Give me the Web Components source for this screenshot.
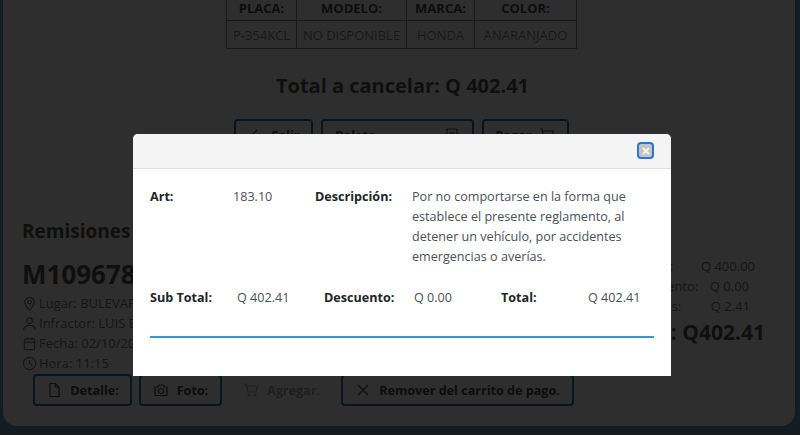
<!DOCTYPE html>
<html lang="es">
<head>
<meta charset="utf-8">
<title>Carrito de pago</title>
<style>
  html, body { margin: 0; height: 435px; overflow: hidden; background: #7097b8; }
  body { font-family: "Open Sans", "Noto Sans", sans-serif; }
</style>
</head>
<body>
<pay-page>
  <vehicle-table></vehicle-table>
  <h2 class="total" slot="total">Total a cancelar: Q 402.41</h2>
  <top-actions slot="actions"></top-actions>
  <remision-card slot="remision"></remision-card>
</pay-page>
<detail-modal></detail-modal>

<script>
const ICONS = {
  back: '<path d="M9 3 4 8l5 5M4 8h10"/>',
  print: '<rect x="3" y="2" width="10" height="12" rx="1"/><path d="M5 6h6M5 9h6"/>',
  cart: '<path d="M1 2h2l2 8h8l1.500-6H4"/><circle cx="6" cy="13" r="1"/><circle cx="12" cy="13" r="1"/>',
  file: '<path d="M4 1.500h5.500L13 5v9.500H4zM9.500 1.500V5H13"/>',
  camera: '<path d="M2 5h3l1-2h4l1 2h3v8.500H2z"/><circle cx="8" cy="9" r="2.500"/>',
  close: '<path d="M3 3l10 10M13 3 3 13"/>',
  pin: '<path d="M8 15S3 10 3 6.500a5 5 0 0 1 10 0C13 10 8 15 8 15z"/><circle cx="8" cy="6.500" r="2"/>',
  user: '<circle cx="8" cy="5" r="3"/><path d="M1.500 14.500c1-3.500 3.500-4.500 6.500-4.500s5.500 1 6.500 4.500"/>',
  date: '<rect x="2.500" y="3" width="11" height="11.500" rx="1.500"/><path d="M2.500 6.500h11M5.500 1.500V4M10.500 1.500V4"/>',
  clock: '<circle cx="8" cy="8" r="6.500"/><path d="M8 4v4l3 2"/>'
};
function icon(name, size) {
  return `<svg width="${size}" height="${size}" viewBox="0 0 16 16" fill="none" stroke="currentColor" stroke-width="1.200">${ICONS[name]}</svg>`;
}

class PayPage extends HTMLElement {
  constructor() {
    super();
    this.attachShadow({ mode: "open" });
    this.shadowRoot.innerHTML = `
    <style>
      :host {
        display: block;
        box-sizing: border-box;
        height: 428px;
        margin: 0 0 0 1px;
        width: 796px;
        overflow: hidden;
        background: #fff;
        color: #777;
        border: 2px solid #5f9ccc;
        border-top: 0;
        border-radius: 0 0 16px 16px;
      }
      .top { display: flex; flex-direction: column; align-items: center; }
      ::slotted(h2.total) {
        margin: 22px 0 18px 7px;
        font-size: 20px;
        line-height: 30px;
        font-weight: 700;
        color: #555;
      }
    </style>
    <div class="top">
      <slot></slot>
      <slot name="total"></slot>
      <slot name="actions"></slot>
    </div>
    <slot name="remision"></slot>`;
  }
}

class VehicleTable extends HTMLElement {
  constructor() {
    super();
    this.attachShadow({ mode: "open" });
    this.shadowRoot.innerHTML = `
    <style>
      :host { display: block; margin: -9px 0 0 5px; font-size: 13px; }
      table { border-collapse: collapse; table-layout: fixed; width: 350px; text-align: center; }
      th, td { border: 1px solid #8a8a8a; padding: 0; }
      th { height: 29px; padding-top: 3px; box-sizing: border-box; color: #4a4a4a; font-weight: 700; }
      td { height: 27px; color: #888; white-space: nowrap; }
    </style>
    <table>
      <colgroup><col style="width:70px"><col style="width:110px"><col style="width:68px"><col style="width:102px"></colgroup>
      <tr><th>PLACA:</th><th>MODELO:</th><th>MARCA:</th><th>COLOR:</th></tr>
      <tr><td>P-354KCL</td><td>NO DISPONIBLE</td><td>HONDA</td><td>ANARANJADO</td></tr>
    </table>`;
  }
}

class ActionBtn extends HTMLElement {
  constructor() {
    super();
    this.attachShadow({ mode: "open" });
    const name = this.getAttribute("icon");
    const side = this.hasAttribute("end");
    this.shadowRoot.innerHTML = `
    <style>
      :host {
        display: inline-flex;
        box-sizing: border-box;
        align-items: center;
        justify-content: var(--j, center);
        gap: 8px;
        height: 32px;
        width: var(--w, auto);
        padding: 0 var(--p, 6px);
        font-size: 12.600px;
        font-weight: 700;
        white-space: nowrap;
        color: #4a4a4a;
        border: 2px solid #2f6aa0;
        border-radius: 4px;
      }
      :host([disabled]) { border-color: transparent; color: #aaa; }
      svg { flex: none; }
    </style>
    ${side ? "" : icon(name, 16)}<slot></slot>${side ? icon(name, 16) : ""}`;
  }
}

class TopActions extends HTMLElement {
  constructor() {
    super();
    this.attachShadow({ mode: "open" });
    this.shadowRoot.innerHTML = `
    <style>
      :host { display: flex; gap: 8px; margin-left: 5px; }
    </style>
    <action-btn icon="back" style="--w:79px">Salir</action-btn>
    <action-btn icon="print" end style="--w:153px;--j:space-between;--p:12px">Boleta</action-btn>
    <action-btn icon="cart" end style="--w:87px">Pagar</action-btn>`;
  }
}

class InfoLine extends HTMLElement {
  constructor() {
    super();
    this.attachShadow({ mode: "open" });
    this.shadowRoot.innerHTML = `
    <style>
      :host { display: flex; align-items: center; gap: 2px; height: 20px; font-size: 13px; color: #777; white-space: nowrap; }
    </style>
    ${icon(this.getAttribute("icon"), 15)}<slot></slot>`;
  }
}

class RemisionCard extends HTMLElement {
  constructor() {
    super();
    this.attachShadow({ mode: "open" });
    this.shadowRoot.innerHTML = `
    <style>
      :host { display: block; padding: 0 30px 0 19px; margin-top: 66px; }
      h3 { margin: 0 0 11px; font-size: 19px; line-height: 28px; font-weight: 700; color: #555; }
      .row { display: flex; justify-content: space-between; }
      h4 { margin: 0 0 1px; font-size: 26px; line-height: 36px; font-weight: 700; color: #555; }
      .money { width: 135px; font-size: 13px; color: #777; }
      .money div { display: flex; justify-content: space-between; height: 20px; line-height: 20px; padding-right: 10px; }
      .money div.d { padding-right: 16px; }
      .money div.i { padding-right: 15px; }
      .money div.i span:first-child { margin-left: -8px; }
      .money b { display: flex; justify-content: flex-end; font-size: 21px; line-height: 32px; color: #555; white-space: nowrap; }
      .btns { display: flex; gap: 8px; margin: 1px 0 0 11px; }
      .btns action-btn:first-child { margin-right: -1px; }
    </style>
    <h3>Remisiones pendientes</h3>
    <div class="row">
      <div>
        <h4>M109678</h4>
        <info-line icon="pin">Lugar: BULEVAR</info-line>
        <info-line icon="user">Infractor: LUIS E</info-line>
        <info-line icon="date">Fecha: 02/10/2019</info-line>
        <info-line icon="clock">Hora: 11:15</info-line>
      </div>
      <div class="money">
        <div><span>Monto:</span><span>Q 400.00</span></div>
        <div class="d"><span>Descuento:</span><span>Q 0.00</span></div>
        <div class="i"><span>Intereses:</span><span>Q 2.41</span></div>
        <b>Total: Q402.41</b>
      </div>
    </div>
    <div class="btns">
      <action-btn icon="file" style="--w:99px">Detalle:</action-btn>
      <action-btn icon="camera" style="--w:83px">Foto:</action-btn>
      <action-btn icon="cart" disabled style="--w:103px">Agregar.</action-btn>
      <action-btn icon="close" style="--w:233px">Remover del carrito de pago.</action-btn>
    </div>`;
  }
}

class DetailModal extends HTMLElement {
  constructor() {
    super();
    this.attachShadow({ mode: "open" });
    this.shadowRoot.innerHTML = `
    <style>
      :host {
        position: fixed;
        inset: 0;
        display: flex;
        justify-content: center;
        align-items: flex-start;
        background: rgba(0, 0, 0, .82);
        font-size: 12.600px;
        line-height: 20px;
        color: #212529;
      }
      .dialog {
        box-sizing: border-box;
        width: 538px;
        height: 242px;
        margin: 134px 0 0 4px;
        background: #fff;
        border-radius: 5px 5px 0 0;
        overflow: hidden;
      }
      header {
        box-sizing: border-box;
        height: 35px;
        display: flex;
        justify-content: flex-end;
        align-items: center;
        padding: 0 17px 1px 0;
        background: #f4f4f4;
        border-bottom: 1px solid #dedede;
      }
      .close {
        box-sizing: border-box;
        width: 17px;
        height: 17px;
        display: flex;
        align-items: center;
        justify-content: center;
        background: #c4c4c4;
        border: 2px solid #2a76d8;
        border-radius: 4px;
        color: #f4f4f4;
      }
      .body { padding: 18px 17px 0; }
      .desc { display: grid; grid-template-columns: 83px 82px 97px 230px; }
      .sums { display: grid; grid-template-columns: 87px 87px 90px 87px 87px auto; margin-top: 21px; }
      b { font-weight: 700; color: #212529; }
      .val { color: #495057; }
      hr { border: 0; height: 2px; background: #3498db; margin: 28px 0 0; }
    </style>
    <div class="dialog">
      <header>
        <div class="close" aria-label="Cerrar"><svg width="8" height="8" viewBox="0 0 8 8" fill="none" stroke="currentColor" stroke-width="2"><path d="M1 1l6 6M7 1 1 7"/></svg></div>
      </header>
      <div class="body">
        <div class="desc">
          <b>Art:</b><span class="val">183.10</span>
          <b>Descripción:</b>
          <span class="val">Por no comportarse en la forma que establece el presente reglamento, al detener un vehículo, por accidentes emergencias o averías.</span>
        </div>
        <div class="sums">
          <b>Sub Total:</b><span class="val">Q 402.41</span>
          <b>Descuento:</b><span class="val">Q 0.00</span>
          <b>Total:</b><span class="val">Q 402.41</span>
        </div>
        <hr>
      </div>
    </div>`;
  }
}

customElements.define("pay-page", PayPage);
customElements.define("vehicle-table", VehicleTable);
customElements.define("action-btn", ActionBtn);
customElements.define("top-actions", TopActions);
customElements.define("info-line", InfoLine);
customElements.define("remision-card", RemisionCard);
customElements.define("detail-modal", DetailModal);
</script>
</body>
</html>
